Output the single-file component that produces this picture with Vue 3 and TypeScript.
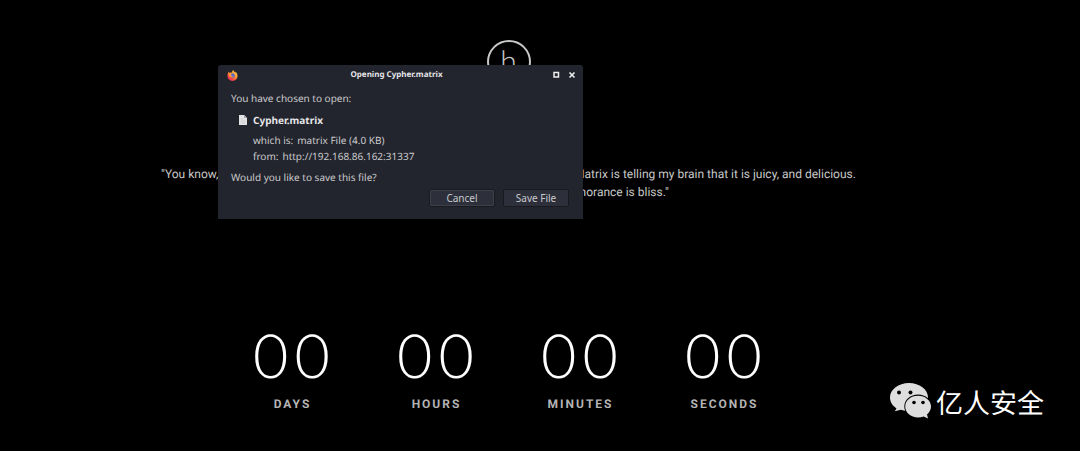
<script setup lang="ts">
import { ref } from 'vue'

interface CounterUnit {
  label: string
  value: number
}

const units: CounterUnit[] = [
  { label: 'Days', value: 0 },
  { label: 'Hours', value: 0 },
  { label: 'Minutes', value: 0 },
  { label: 'Seconds', value: 0 },
]

const dialogOpen = ref(true)

function pad(value: number): string {
  return String(value).padStart(2, '0')
}

function closeDialog(): void {
  dialogOpen.value = false
}
</script>

<template>
  <div class="page">
    <main class="content">
      <div class="logo">h</div>
      <p class="quote">
        "You know, I know this steak doesn't exist. I know when I put it in a mouth, the Matrix is telling my brain that it is juicy, and delicious.<br />
        After nine years, you know what I realize? Ignorance is bliss."
      </p>
      <section class="countdown">
        <div v-for="unit in units" :key="unit.label" class="unit">
          <span class="digits">{{ pad(unit.value) }}</span>
          <span class="label">{{ unit.label }}</span>
        </div>
      </section>
    </main>

    <div v-if="dialogOpen" class="dialog" role="dialog" aria-labelledby="dialog-title">
      <header class="titlebar">
        <svg class="firefox" viewBox="0 0 24 24" aria-hidden="true">
          <defs>
            <linearGradient id="flame" x1="0.9" y1="0" x2="0.2" y2="1">
              <stop offset="0" stop-color="#ffe34d" />
              <stop offset="0.45" stop-color="#ff9330" />
              <stop offset="0.8" stop-color="#f3404a" />
              <stop offset="1" stop-color="#e0306c" />
            </linearGradient>
          </defs>
          <path fill="url(#flame)" d="M4 3c0 2 1 3 2 3 2-1 4-1 5 0 0-3 1-5 3-6 0 3 3 4 5 6 0-1 0-2-1-3 3 2 5 6 5 10a11 11 0 0 1-22 0C1 9 2 6 4 3z" />
          <circle cx="12" cy="12" r="5" fill="#536bd0" />
          <path fill="#ff9b35" d="M4 8c3-2 6-1 8 1-2 0-3 1-4 2 1 2 3 3 6 2-1 3-7 4-9 0-1-2-1-3-1-5z" />
        </svg>
        <h1 id="dialog-title" class="title">Opening Cypher.matrix</h1>
        <div class="window-actions">
          <button type="button" class="icon-button" aria-label="Maximize">
            <svg viewBox="0 0 8 8"><rect x="2" y="1.500" width="4.500" height="4.500" fill="none" stroke="#eee" stroke-width="1.500" /></svg>
          </button>
          <button type="button" class="icon-button" aria-label="Close" @click="closeDialog">
            <svg viewBox="0 0 8 8"><path d="M1.5 1.500l5 5M6.5 1.500l-5 5" fill="none" stroke="#eee" stroke-width="1.600" /></svg>
          </button>
        </div>
      </header>
      <div class="dialog-body">
        <p class="line">You have chosen to open:</p>
        <div class="file">
          <svg class="file-icon" viewBox="0 0 8 10" aria-hidden="true">
            <path d="M0 0h5l3 3v7H0z" fill="#e2e2e4" />
            <path d="M5 0v3h3z" fill="#a9a9b0" />
            <path d="M2 4h2M2 6h4M2 8h4" stroke="#c6c6ca" stroke-width="0.6" />
          </svg>
          <strong class="file-name">Cypher.matrix</strong>
        </div>
        <dl class="details">
          <div class="detail"><dt>which is:</dt><dd>matrix File (4.0 KB)</dd></div>
          <div class="detail"><dt>from:</dt><dd>http://192.168.86.162:31337</dd></div>
        </dl>
        <p class="line">Would you like to save this file?</p>
        <div class="actions">
          <button type="button" class="button focused" @click="closeDialog">Cancel</button>
          <button type="button" class="button" @click="closeDialog">Save File</button>
        </div>
      </div>
    </div>

    <div class="watermark">
      <svg class="wechat" viewBox="0 0 42 36" aria-hidden="true">
        <path fill="#dedede" d="M19 0C8.500 0 0 6.500 0 14.500c0 4.500 2.600 8.300 6.500 10.900L4.800 28.300l6-1.500c2.500.9 5.300 1.300 8.200 1.300 10.500 0 19-6 19-13.800S29.500 0 19 0z" />
        <ellipse cx="28" cy="23.500" rx="13.700" ry="12" fill="#000" />
        <path fill="#dedede" d="M28 12.700c-7.200 0-12.800 4.800-12.800 10.900S20.800 34.500 28 34.500c2 0 4-.4 5.700-1.100L38 35.500l-1-4c2.500-2 4-4.800 4-7.900 0-6.100-5.800-10.900-13-10.900z" />
        <circle cx="9" cy="9.500" r="2" fill="#000" />
        <circle cx="20.500" cy="9.500" r="2" fill="#000" />
        <circle cx="24" cy="19.500" r="1.800" fill="#000" />
        <circle cx="33" cy="19.500" r="1.800" fill="#000" />
      </svg>
      <span>亿人安全</span>
    </div>
  </div>
</template>

<style>
body {
  margin: 0;
  background: #000;
}
</style>

<style scoped>
.page {
  position: relative;
  box-sizing: border-box;
  min-height: 100vh;
  padding: 40px 63px 0 0;
  background: #000;
  color: #fff;
  font-family: Roboto, "Liberation Sans", sans-serif;
  text-rendering: geometricPrecision;
}

.content {
  display: flex;
  flex-direction: column;
  align-items: center;
}

.logo {
  box-sizing: border-box;
  width: 44px;
  height: 44px;
  border: 2px solid #c8c8c8;
  border-radius: 50%;
  color: #c8c8c8;
  font-family: Lato, sans-serif;
  font-size: 30px;
  font-weight: 300;
  line-height: 38px;
  text-align: center;
}

.quote {
  margin: 81px 0 0;
  color: #c8c8c8;
  font-size: 12px;
  line-height: 18px;
  text-align: center;
  white-space: nowrap;
}

.countdown {
  display: grid;
  grid-template-columns: repeat(4, 144px);
  margin-top: 118px;
}

.unit {
  display: flex;
  flex-direction: column;
  align-items: center;
}

.digits {
  font-family: Lato, sans-serif;
  font-size: 61px;
  font-weight: 300;
  line-height: 72px;
  letter-spacing: 6px;
  padding-left: 4px;
}

.label {
  margin-top: 5px;
  color: #b4b4b4;
  font-size: 12px;
  font-weight: 700;
  line-height: 16px;
  letter-spacing: 2px;
  text-transform: uppercase;
}

.dialog {
  position: absolute;
  top: 65px;
  left: 218px;
  width: 365px;
  border-radius: 3px 3px 0 0;
  background: #23252e;
  color: #c9cacc;
  font-family: "Noto Sans", sans-serif;
  font-size: 10px;
  line-height: 16px;
}

.titlebar {
  display: grid;
  grid-template-columns: 26px 1fr 40px;
  align-items: center;
  height: 20px;
  padding: 0 3px 0 9px;
}

.firefox {
  width: 11px;
  height: 11px;
}

.title {
  margin: 0;
  color: #e4e4e6;
  font-size: 8px;
  font-weight: 700;
  text-align: center;
}

.window-actions {
  display: flex;
  justify-content: flex-end;
}

.icon-button {
  display: flex;
  padding: 4px;
  border: 0;
  background: none;
}

.icon-button svg {
  width: 8px;
  height: 8px;
}

.dialog-body {
  padding: 5px 14px 12px 13px;
}

.line {
  margin: 0;
}

.file {
  display: flex;
  align-items: center;
  gap: 6px;
  padding: 6px 8px 4px;
}

.file-icon {
  width: 8px;
  height: 10px;
}

.file-name {
  color: #e4e4e6;
}

.details {
  margin: 0 0 5px 22px;
}

.detail {
  display: flex;
  gap: 4px;
}

.detail dd {
  margin: 0;
}

.actions {
  display: flex;
  justify-content: flex-end;
  gap: 8px;
  margin-top: 4px;
}

.button {
  box-sizing: border-box;
  width: 66px;
  height: 18px;
  padding: 0;
  border: 1px solid #181a20;
  border-radius: 2px;
  background: #2d2f3b;
  color: #c9cacc;
  font: inherit;
  line-height: 16px;
}

.focused {
  box-shadow: inset 0 0 0 1px #3d3f4a;
}

.watermark {
  position: absolute;
  right: 36px;
  bottom: 29px;
  display: flex;
  align-items: center;
  gap: 4px;
  color: #fff;
  font-family: "Noto Sans CJK SC", sans-serif;
  font-size: 27px;
  line-height: 40px;
}

.wechat {
  width: 42px;
  height: 36px;
  margin-bottom: 3px;
}
</style>
